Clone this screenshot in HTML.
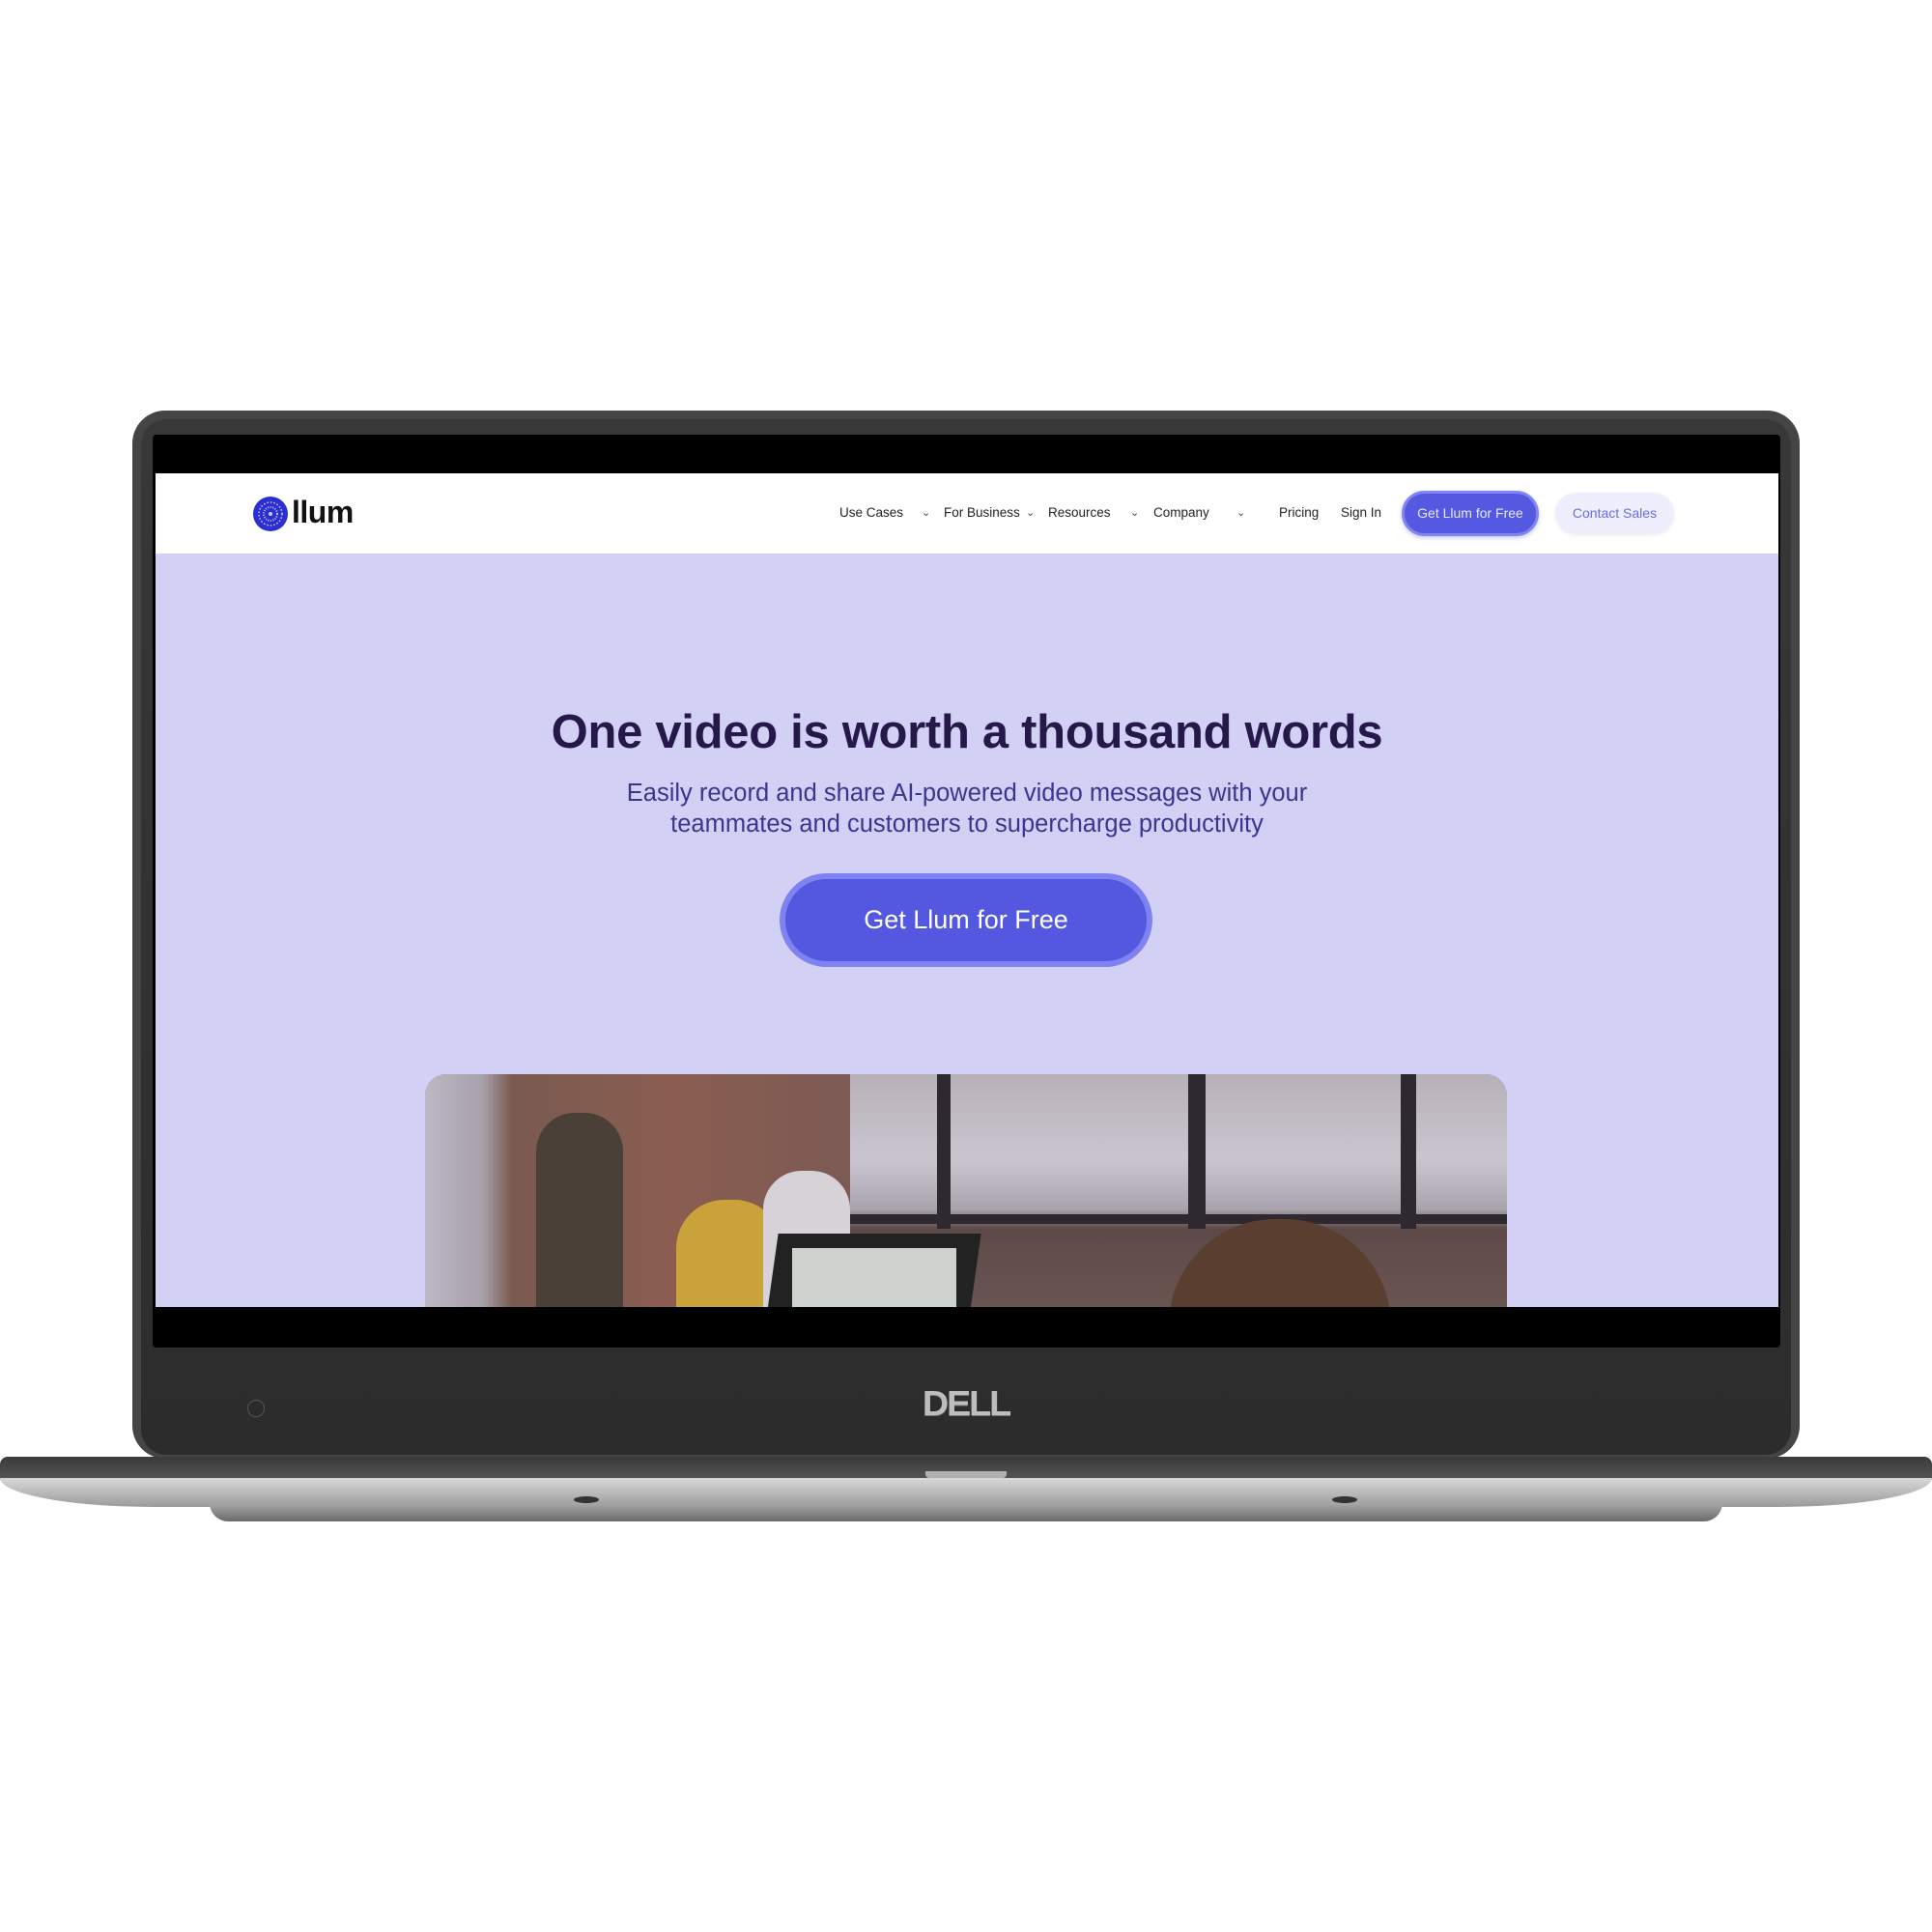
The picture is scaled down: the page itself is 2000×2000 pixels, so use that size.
<!DOCTYPE html>
<html><head><meta charset="utf-8"><style>
*{margin:0;padding:0;box-sizing:border-box}
body{width:2000px;height:2000px;background:#fff;position:relative;overflow:hidden;font-family:"Liberation Sans",sans-serif}
.abs{position:absolute}
.bezel{left:137px;top:425px;width:1726px;height:1085px;background:#454545;border-radius:34px}
.bezel2{left:146px;top:434px;width:1708px;height:1072px;background:linear-gradient(#383838,#2c2c2c);border-radius:26px}
.black{left:158px;top:450px;width:1685px;height:945px;background:#000;border-radius:4px}
.page{left:161px;top:490px;width:1680px;height:863px;background:#d2d1f5;overflow:hidden}
.nav{left:0;top:0;width:1680px;height:83px;background:#fff}
.nav span{position:absolute;top:33px;font-size:13.5px;color:#222}
.car{font-size:11px!important;color:#444!important;top:34px!important}
</style></head><body>
<div class="abs bezel"></div>
<div class="abs bezel2"></div>
<div class="abs black"></div>
<div class="abs page">
 <div class="abs nav">
  <svg class="abs" style="left:100px;top:23px" width="38" height="38" viewBox="0 0 38 38">
   <circle cx="19" cy="19" r="18" fill="#2b2fd0"/>
   <circle cx="19" cy="19" r="12" fill="none" stroke="#c9caff" stroke-width="1.5" stroke-dasharray="1.5 2"/>
   <circle cx="19" cy="19" r="7" fill="none" stroke="#c9caff" stroke-width="2" stroke-dasharray="1 1.5"/>
   <circle cx="19" cy="19" r="2" fill="#c9caff"/>
  </svg>
  <div class="abs" style="left:141px;top:22px;font-size:32px;font-weight:bold;color:#111;letter-spacing:-0.5px">llum</div>
  <span style="left:708px">Use Cases</span><span class="car" style="left:793px">⌄</span>
  <span style="left:816px">For Business</span><span class="car" style="left:901px">⌄</span>
  <span style="left:924px">Resources</span><span class="car" style="left:1009px">⌄</span>
  <span style="left:1033px">Company</span><span class="car" style="left:1119px">⌄</span>
  <span style="left:1163px">Pricing</span>
  <span style="left:1227px">Sign In</span>
  <div class="abs" style="left:1290px;top:18px;width:142px;height:47px;border-radius:24px;background:#5558e0;border:3px solid #8084f5;color:#e8e8ff;font-size:14px;text-align:center;line-height:41px;box-shadow:0 2px 4px rgba(80,80,200,.3)">Get Llum for Free</div>
  <div class="abs" style="left:1449px;top:20px;width:123px;height:42px;border-radius:21px;background:#eeeefc;color:#6a6de0;font-size:14px;text-align:center;line-height:42px;box-shadow:0 2px 4px rgba(0,0,0,.08)">Contact Sales</div>
 </div>
 <div class="abs" style="left:0;top:240px;width:1680px;text-align:center;font-size:49px;font-weight:bold;color:#26184a;letter-spacing:-0.3px">One video is worth a thousand words</div>
 <div class="abs" style="left:0;top:315px;width:1680px;text-align:center;font-size:25.5px;line-height:32px;color:#3b3590">Easily record and share AI-powered video messages with your<br>teammates and customers to supercharge productivity</div>
 <div class="abs" style="left:646px;top:414px;width:386px;height:97px;border-radius:49px;background:#5457df;border:6px solid #7f83f2;color:#fff;font-size:27px;text-align:center;line-height:85px">Get Llum for Free</div>
 <div class="abs" style="left:279px;top:622px;width:1120px;height:245px;border-radius:22px 22px 0 0;overflow:hidden;background:#8a7a78">
  <div class="abs" style="left:0;top:0;width:450px;height:245px;background:linear-gradient(90deg,#bcb8c4 0,#a7a0aa 60px,#7a5a50 90px,#8a5d50 250px,#7c5a55 450px)"></div>
  <div class="abs" style="left:440px;top:0;width:680px;height:245px;background:linear-gradient(#b8b0b8 0,#c9c5cf 90px,#a8a2ac 140px,#5d4a48 160px,#6b5552 245px)"></div>
  <div class="abs" style="left:530px;top:0;width:14px;height:160px;background:#2e2830"></div>
  <div class="abs" style="left:790px;top:0;width:18px;height:160px;background:#2e2830"></div>
  <div class="abs" style="left:1010px;top:0;width:16px;height:160px;background:#2e2830"></div>
  <div class="abs" style="left:440px;top:145px;width:680px;height:10px;background:#2e2830"></div>
  <div class="abs" style="left:115px;top:40px;width:90px;height:205px;border-radius:40px 40px 0 0;background:#4a4038"></div>
  <div class="abs" style="left:260px;top:130px;width:110px;height:115px;border-radius:50px 50px 0 0;background:#c9a23a"></div>
  <div class="abs" style="left:350px;top:100px;width:90px;height:145px;border-radius:40px 40px 0 0;background:#d6d2d8"></div>
  <div class="abs" style="left:360px;top:165px;width:210px;height:80px;background:#222;transform:skewX(-8deg)"></div>
  <div class="abs" style="left:380px;top:180px;width:170px;height:65px;background:#cfd3cf"></div>
  <div class="abs" style="left:770px;top:150px;width:230px;height:120px;border-radius:110px 110px 0 0;background:#5a3e30"></div>
 </div>
</div>
<div class="abs" style="left:256px;top:1449px;width:18px;height:18px;border-radius:50%;background:#2a2a2a;border:1px solid #555"></div>
<div class="abs" style="left:945px;top:1432px;width:110px;text-align:center;font-size:36px;font-weight:bold;color:#bdbdbd;letter-spacing:-2px;text-shadow:0 1px 0 #777;transform:scaleX(1.05)">DELL</div>
<div class="abs" style="left:0;top:1508px;width:2000px;height:24px;background:linear-gradient(#3a3a3a,#555);border-radius:8px 8px 0 0"></div>
<div class="abs" style="left:0;top:1530px;width:2000px;height:30px;background:linear-gradient(#d8d8d8,#b4b4b4 60%,#9a9a9a);border-radius:0 0 160px 160px/0 0 30px 30px"></div>
<div class="abs" style="left:217px;top:1556px;width:1566px;height:19px;background:linear-gradient(#a8a8a8,#6a6a6a);border-radius:0 0 20px 20px"></div>
<div class="abs" style="left:958px;top:1523px;width:84px;height:7px;background:#b0b0b0;border-radius:0 0 4px 4px"></div>
<div class="abs" style="left:594px;top:1549px;width:26px;height:7px;border-radius:50%;background:#333"></div>
<div class="abs" style="left:1379px;top:1549px;width:26px;height:7px;border-radius:50%;background:#333"></div>
</body></html>
